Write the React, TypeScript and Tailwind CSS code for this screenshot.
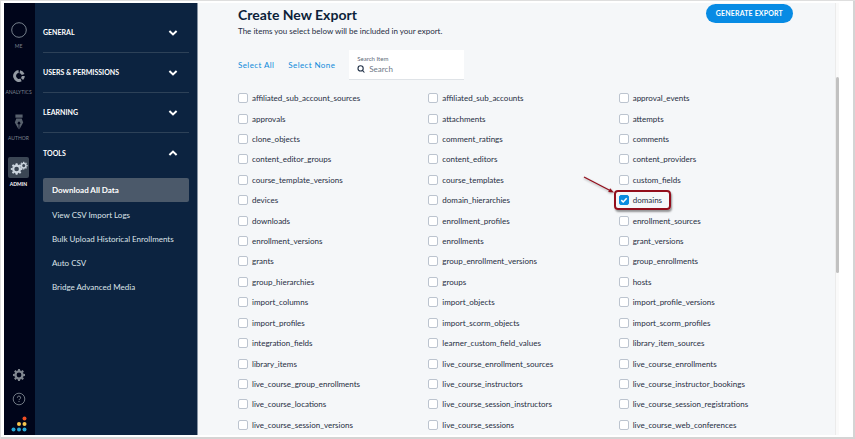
import { useState } from "react";
import type { ReactNode } from "react";

const EXPORT_ITEMS = [
    "affiliated_sub_account_sources", "affiliated_sub_accounts", "approval_events",
    "approvals", "attachments", "attempts",
    "clone_objects", "comment_ratings", "comments",
    "content_editor_groups", "content_editors", "content_providers",
    "course_template_versions", "course_templates", "custom_fields",
    "devices", "domain_hierarchies", "domains",
    "downloads", "enrollment_profiles", "enrollment_sources",
    "enrollment_versions", "enrollments", "grant_versions",
    "grants", "group_enrollment_versions", "group_enrollments",
    "group_hierarchies", "groups", "hosts",
    "import_columns", "import_objects", "import_profile_versions",
    "import_profiles", "import_scorm_objects", "import_scorm_profiles",
    "integration_fields", "learner_custom_field_values", "library_item_sources",
    "library_items", "live_course_enrollment_sources", "live_course_enrollments",
    "live_course_group_enrollments", "live_course_instructors", "live_course_instructor_bookings",
    "live_course_locations", "live_course_session_instructors", "live_course_session_registrations",
    "live_course_session_versions", "live_course_sessions", "live_course_web_conferences",
];

const SECTIONS = ["GENERAL", "USERS & PERMISSIONS", "LEARNING"];
const TOOLS = ["View CSV Import Logs", "Bulk Upload Historical Enrollments", "Auto CSV", "Bridge Advanced Media"];
const TEETH = [0, 45, 90, 135, 180, 225, 270, 315];

const Gear = ({ cx, cy, r }: { cx: number; cy: number; r: number }) => (
    <g transform={`translate(${cx} ${cy}) scale(${r / 10})`}>
        <circle r="5.8" fill="none" stroke="currentColor" strokeWidth="3.6" />
        {TEETH.map((angle) => (
            <path key={angle} d="M-2.2 -6.8L-1.5 -10H1.5L2.2 -6.8Z" fill="currentColor" transform={`rotate(${angle})`} />
        ))}
    </g>
);

const Chevron = ({ up }: { up?: boolean }) => (
    <svg viewBox="0 0 10 8" className="w-[10px] h-2" fill="none" stroke="currentColor" strokeWidth="2">
        <path d={up ? "M1.4 6L5 2.6L8.6 6" : "M1.4 2L5 5.4L8.6 2"} />
    </svg>
);

const RailLink = ({ label, active, children }: { label: string; active?: boolean; children: ReactNode }) => (
    <a href="#" className={`flex flex-col items-center ${active ? "text-white" : "text-[#7b838f]"}`}>
        <span className={`flex items-center justify-center w-[21px] h-[21px] rounded-xs ${active ? "bg-[#3b4654] text-[#ccd5df]" : ""}`}>
            {children}
        </span>
        <span className={`mt-[3px] text-[5px] leading-[6px] ${active ? "font-bold" : ""}`}>{label}</span>
    </a>
);

const Rail = () => (
    <nav className="flex flex-col items-center w-[31px] shrink-0 pt-4 pr-[2px] pb-[3px] bg-[#00051a]">
        <div className="flex flex-col gap-4">
            <RailLink label="ME">
                <svg viewBox="0 0 16 16" className="w-4 h-4">
                    <circle cx="8" cy="8" r="7.3" fill="none" stroke="#75808c" />
                </svg>
            </RailLink>
            <RailLink label="ANALYTICS">
                <svg viewBox="0 0 12 12" className="w-3 h-3 text-[#939aa3]" fill="none" stroke="currentColor" strokeWidth="3">
                    <path d="M5.6 1.6A4.4 4.4 0 1 0 8 9.9" />
                    <path d="M6.8 1.7A4.4 4.4 0 0 1 10.1 4.5" />
                    <path d="M10.3 5.9A4.4 4.4 0 0 1 9 9" />
                </svg>
            </RailLink>
            <RailLink label="AUTHOR">
                <svg viewBox="0 0 10 16" className="w-[10px] h-4 text-[#58616d]" fill="currentColor">
                    <path d="M1.4 0.5H8.6V3.7H1.4Z" />
                    <path fillRule="evenodd" d="M2.3 4.5H7.7L9.2 8.6L5.35 15.5V10.6A1.4 1.4 0 1 0 4.65 10.6V15.5L0.8 8.6Z" />
                </svg>
            </RailLink>
            <RailLink label="ADMIN" active>
                <svg viewBox="0 0 18 16" className="w-[18px] h-4">
                    <Gear cx={6.6} cy={9} r={5.8} />
                    <Gear cx={13.7} cy={5.6} r={3.9} />
                </svg>
            </RailLink>
        </div>
        <div className="flex flex-col items-center gap-[10px] mt-auto">
            <button type="button" aria-label="Settings" className="text-[#818891]">
                <svg viewBox="0 0 14 14" className="block w-[14px] h-[14px]"><Gear cx={7} cy={7} r={6} /></svg>
            </button>
            <button type="button" aria-label="Help" className="text-[#7c848e]">
                <svg viewBox="0 0 14 14" className="block w-[14px] h-[14px]" fill="none" stroke="currentColor">
                    <circle cx="7" cy="7" r="5.8" strokeWidth="0.9" />
                    <path d="M5.4 5.7A1.6 1.6 0 1 1 7.7 7.1Q7 7.4 7 8.1" />
                    <path d="M7 9V10" />
                </svg>
            </button>
            <svg viewBox="0 0 16 16" className="w-4 h-4">
                <g fill="#28a9d6">
                    <circle cx="2.5" cy="13.5" r="2" />
                    <circle cx="8" cy="13.5" r="2" />
                    <circle cx="13.5" cy="13.5" r="2" />
                </g>
                <g fill="#f8c64e">
                    <circle cx="8" cy="8" r="2" />
                    <circle cx="13.5" cy="8" r="2" />
                </g>
                <circle cx="13.5" cy="2.5" r="2" fill="#f04e23" />
            </svg>
        </div>
    </nav>
);

const Sidebar = () => (
    <nav className="flex flex-col w-[163px] shrink-0 px-2 pt-[10px] bg-[#0c2340] text-white border-r border-[#8693a3]">
        {SECTIONS.map((section) => (
            <button key={section} type="button" className="flex items-center justify-between h-10 pr-[11px] border-b border-[#2d4158] text-[7px] font-bold">
                {section}
                <Chevron />
            </button>
        ))}
        <button type="button" className="flex items-center justify-between h-10 pr-[11px] text-[7px] font-bold">
            TOOLS
            <Chevron up />
        </button>
        <ul className="mt-[5px] text-[8px] leading-6 text-[#dde3e9]">
            <li className="mb-px">
                <a href="#" className="block px-[9px] rounded-xs bg-[#4b596a] font-bold text-white">Download All Data</a>
            </li>
            {TOOLS.map((tool) => (
                <li key={tool}><a href="#" className="block px-[9px] whitespace-nowrap">{tool}</a></li>
            ))}
        </ul>
    </nav>
);

const ExportItem = ({ name, checked, onToggle }: { name: string; checked: boolean; onToggle: () => void }) => (
    <label className="relative flex items-center gap-1 justify-self-start">
        <input type="checkbox" checked={checked} onChange={onToggle} className="peer appearance-none w-[10px] h-[10px] rounded-xs border border-[#bcc4cf] bg-white checked:bg-[#0a8be0] checked:border-[#0a8be0]" />
        <svg viewBox="0 0 10 10" className="absolute left-0 w-[10px] h-[10px] hidden peer-checked:block pointer-events-none" fill="none" stroke="white" strokeWidth="1.5">
            <path d="M2.3 5.1L4.2 7L7.7 3.2" />
        </svg>
        {name}
        {name === "domains" && (
            <>
                <span className="absolute -left-[5px] -right-[9px] -top-1 -bottom-1 rounded border-2 border-[#930e1c] shadow-[1px_2px_2px_#0006] pointer-events-none" />
                <svg viewBox="0 0 32 20" className="absolute -left-9 -top-4 w-8 h-5 overflow-visible drop-shadow-[0_1px_1px_#0005] pointer-events-none">
                    <path d="M1 -1L28 13" stroke="#930e1c" strokeWidth="1.3" />
                    <path d="M31 14.6L25.2 14L27.2 10.2Z" fill="#930e1c" />
                </svg>
            </>
        )}
    </label>
);

const App = () => {
    const [selected, setSelected] = useState<string[]>(["domains"]);
    const toggle = (name: string) => {
        setSelected(selected.includes(name) ? selected.filter((item) => item !== name) : [...selected, name]);
    };

    return (
        <div className="flex min-h-screen pt-[2px] pb-1 pl-[3px] pr-4 bg-white border-l border-t border-[#dedede] shadow-[inset_-2px_-2px_0_#d4d4d4] font-['Lato',sans-serif]">
            <Rail />
            <Sidebar />
            <main className="flex flex-col flex-1 min-w-0 pl-10 pr-[26px] bg-[#f5f7f9] text-[#1f2d42]">
                <header className="flex items-start justify-between pr-4">
                    <div>
                        <h1 className="mt-[2px] text-[14px] leading-5 font-bold text-[#0c1f3a]">Create New Export</h1>
                        <p className="text-[8px] leading-3">The items you select below will be included in your export.</p>
                    </div>
                    <button type="button" className="mt-px h-[19px] px-[10px] rounded-full bg-[#078be4] text-[7px] font-bold tracking-wide text-white">
                        GENERATE EXPORT
                    </button>
                </header>
                <div className="flex items-center mt-[13px] text-[8px] text-[#0f8ada]">
                    <button type="button" className="mr-[14px] tracking-wider">Select All</button>
                    <button type="button" className="mr-[14px] tracking-wider">Select None</button>
                    <div className="w-[115px] h-[30px] px-2 pt-[5px] bg-white border-b border-[#dfe3e7] text-[#5d6876]">
                        <label htmlFor="search" className="block text-[6px] leading-2">Search Item</label>
                        <div className="flex items-center gap-1">
                            <svg viewBox="0 0 8 8" className="w-2 h-2 shrink-0" fill="none" stroke="#1f2f45" strokeWidth="1.1">
                                <circle cx="3.6" cy="3.4" r="2.6" />
                                <path d="M5.4 5.3L7.4 7.5" />
                            </svg>
                            <input id="search" type="text" placeholder="Search" className="w-full min-w-0 text-[8px] leading-3 outline-none placeholder:text-[#6d7785]" />
                        </div>
                    </div>
                </div>
                <div className="grid grid-cols-3 auto-rows-fr items-center flex-1 mt-2 text-[8px] leading-3">
                    {EXPORT_ITEMS.map((name) => (
                        <ExportItem key={name} name={name} checked={selected.includes(name)} onToggle={() => toggle(name)} />
                    ))}
                </div>
            </main>
            <div className="w-1 shrink-0 pt-[74px] bg-[#fafafa] border-l border-[#ebebeb]">
                <div className="h-[196px] rounded-full bg-[#c1c1c1]" />
            </div>
        </div>
    );
};

export default App;
